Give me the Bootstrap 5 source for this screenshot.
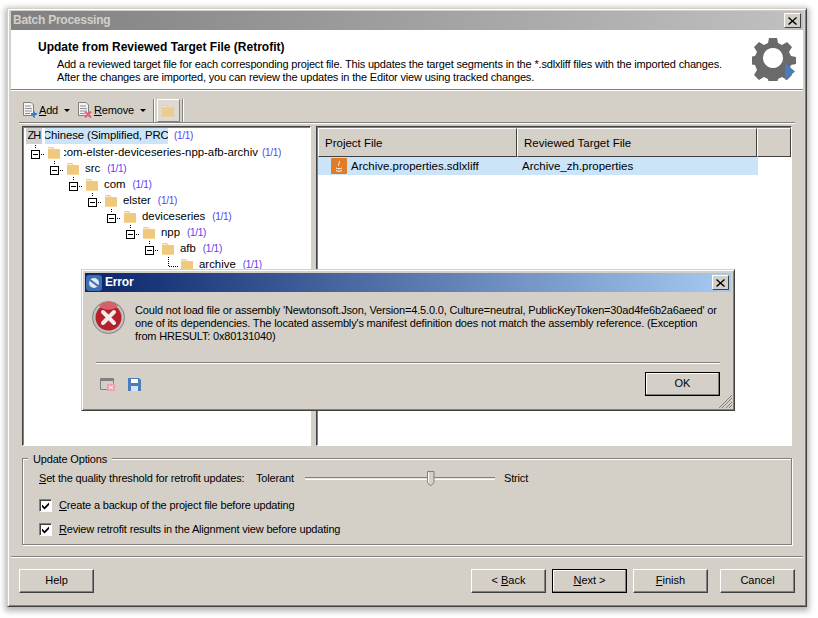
<!DOCTYPE html>
<html lang="en"><head><meta charset="utf-8"><title>Batch Processing</title>
<link href="https://cdn.jsdelivr.net/npm/bootstrap@5.3.0/dist/css/bootstrap.min.css" rel="stylesheet">
<style>
html,body{background:#fff;margin:0;height:618px;overflow:hidden}
body{font-family:"Liberation Sans",Arial,sans-serif;font-size:11px;letter-spacing:-.17px;line-height:13px;color:#000}
u{text-decoration:underline;text-underline-offset:1px}
.wz{position:relative;margin:8px 0 0 7px;width:800px;height:599px;background:#d4d0c8;border:1px solid;border-color:#d4d0c8 #404040 #404040 #d4d0c8;padding:2px 3px 3px 3px;box-shadow:inset 1px 1px 0 #fff,inset -1px -1px 0 #808080,0 2px 6px 2px rgba(0,0,0,.3)}
.tbar{height:19px;padding:0 2px;background:linear-gradient(90deg,#808080,#c0c0c0);color:#d4d0c8;font-weight:700;font-size:12px;letter-spacing:-.25px}
.xbtn{width:17px;height:15px;padding:0;background:#d4d0c8;border:1px solid;border-color:#fff #404040 #404040 #fff;color:#000;display:flex;align-items:center;justify-content:center}
.hdr{height:60px;background:#fff;border-bottom:1px solid #808080;box-shadow:0 1px 0 #fff;position:relative}
.hdr h1{font-size:12px;line-height:13px;font-weight:700;margin:0;padding:11px 0 0 27px;letter-spacing:0}
.hdr p{margin:4px 0 0 46px;white-space:nowrap}
.hgear{position:absolute;left:741px;top:7px}
.tools{height:33px;margin:0 8px;border-bottom:1px solid #808080;padding-top:9px;box-shadow:0 1px 0 #fff}
.tools svg{display:block}
.tbtn{margin-left:3px;gap:2px;height:22px}
.caret{width:0;height:0;border:3px solid transparent;border-top:3px solid #000;border-bottom:0;margin-left:4px}
.addb{width:52px}.remb{width:76px}
.tsep{width:2px;height:23px;border-left:1px solid #808080;border-right:1px solid #fff}
.tfold{width:23px;height:23px;border:1px solid;border-color:#fff #808080 #808080 #fff;margin:0 2px;background:#dedad2}
.panes{height:320px;margin:3px 0 0 11px;gap:5px}
.sunk{background:#fff;border:1px solid;border-color:#404040 #fff #fff #404040;box-shadow:inset 1px 1px 0 #808080;overflow:hidden}
.ltree{width:289px;padding:1px 0 0 3px;font-size:11.4px;letter-spacing:0}
.rlist{width:476px;padding:1px 0 0 1px;font-size:11.5px;letter-spacing:0}
.trow{height:16px;white-space:nowrap;line-height:14px}
.d1{padding-left:5px}.d2{padding-left:24px}.d3{padding-left:43px}.d4{padding-left:62px}.d5{padding-left:81px}.d6{padding-left:100px}.d7{padding-left:119px}.d8{padding-left:138px}
.xpnd{width:16px;flex:none}
.fold{margin-right:5px;flex:none}
.cnt{color:#5c3cf0;font-size:10px;letter-spacing:-.3px;margin:1px 0 0 7px}
.cnt.near{margin-left:4px}
.cnt.far{margin-left:6px}
.zh{width:16px;height:16px;background:#d0d0d0;text-align:center;font-size:11px;letter-spacing:-.8px;margin-right:3px;flex:none}
.sel{width:123px;height:16px;background:#cce4f7;overflow:hidden}
.sel span{margin-left:-2px;letter-spacing:-.12px}
.clip{width:194px;overflow:hidden;margin-left:-2px}
.clip span{margin-left:-3px}
.th{height:29px;background:#d4d0c8;border:1px solid;border-color:#fff #404040 #404040 #fff;line-height:28px;padding-left:6px}
.c1{width:199px}.c2{width:240px}.c3{width:34px}
.drow{width:440px;height:18px;background:#cce4f7;line-height:18px}
.ficon{margin:0 4px 0 13px}
.dn1{width:171px}
.opts{height:87px;margin:12px 0 0 11px;width:770px;border:1px solid #808080;box-shadow:inset 1px 1px 0 #fff,1px 1px 0 #fff;padding:0 0 0 16px}
.olg{width:max-content;background:#d4d0c8;margin:-6px 0 0 -11px;padding:0 5px 0 5px;height:13px}
.orow{height:13px;margin-top:6px}
.olbl{width:217px;flex:none}.otol{width:49px;flex:none}
.trk{width:190px;height:3px;margin:0 9px 0 0;border-top:1px solid #808080;border-bottom:1px solid #fff;background:#e8e6e0;position:relative}
.thumb{position:absolute;left:122px;top:-7px}
.ochk{margin-top:14px;height:13px}
.ochk.nx{margin-top:11px}
.bx{width:13px;height:13px;background:#fff;border:1px solid;border-color:#808080 #fff #fff #808080;box-shadow:inset 1px 1px 0 #404040;margin-right:7px;flex:none}
.bx svg{display:block;margin:1px}
.sep{height:2px;margin-top:11px;border-top:1px solid #808080;border-bottom:1px solid #fff}
.btns{padding:11px 8px 0 8px}
.wb{width:75px;height:24px;padding:0 0 2px;background:#d4d0c8;color:#000;font:inherit;border:1px solid;border-color:#fff #404040 #404040 #fff;box-shadow:inset -1px -1px 0 #808080;border-radius:0}
.wb.def{outline:1px solid #000;outline-offset:-1px;border-color:#fff #404040 #404040 #fff;box-shadow:inset -1px -1px 0 #808080,inset 1px 1px 0 #fff}
.ms6{margin-left:6px}.ms12{margin-left:12px}
.dlg{position:absolute;left:73px;top:260px;width:654px;height:142px;background:#d4d0c8;border:1px solid;border-color:#d4d0c8 #404040 #404040 #d4d0c8;box-shadow:inset 1px 1px 0 #fff,inset -1px -1px 0 #808080;padding:3px}
.dtb{height:19px;background:linear-gradient(90deg,#0a246a,#a6caf0);color:#fff;font-weight:700;font-size:12px;padding:0 2px 0 1px;gap:3px}
.dbody{padding:9px 0 0 7px}
.dmsg{margin:3px 0 0 10px;white-space:nowrap}
.dsep{height:2px;margin:19px 11px 0 11px;border-top:1px solid #808080;border-bottom:1px solid #fff}
.dft{padding:8px 11px 0 15px}
.grip{position:absolute;right:2px;bottom:2px}
</style></head><body>
<svg width="0" height="0" class="d-none"><defs>
<g id="fo"><path d="M1 3.500 1.500 2H6L7.500 4H13V13.500H1Z" fill="#f0cd85"/><path d="M1 5H13V13.500H1Z" fill="#efc97d"/><path d="M1.500 3H6V4H1.500Z" fill="#fff" opacity=".6"/></g>
<g id="ex"><rect x=".5" y=".5" width="8" height="8" fill="#fff" stroke="#000"/><path d="M2 4.500H7" stroke="#000"/><path d="M4.500-5V-1M10 4.500H14" stroke="#000" stroke-dasharray="1 1"/></g>
<g id="doc"><path d="M1.500.5H9L11.500 3V13.500H1.500Z" fill="#f4f4f4" stroke="#808080"/><path d="M3 4H9M3 6.500H10M3 9H10M3 11.500H8" stroke="#909090"/></g>
</defs></svg>
<div class="wz d-flex flex-column">
 <div class="tbar d-flex justify-content-between align-items-center"><span>Batch Processing</span><button class="xbtn" aria-label="Close"><svg width="9" height="8"><path d="M1 0 4.500 3.200 8 0 9 1 5.500 4 9 7 8 8 4.500 5 1 8 0 7 3.500 4 0 1Z"/></svg></button></div>
 <div class="hdr">
  <h1>Update from Reviewed Target File (Retrofit)</h1>
  <p>Add a reviewed target file for each corresponding project file. This updates the target segments in the *.sdlxliff files with the imported changes.<br>After the changes are imported, you can review the updates in the Editor view using tracked changes.</p>
  <svg class="hgear" width="44" height="44" viewBox="0 0 44 44"><path fill="#6a6a6a" fill-rule="evenodd" d="M17 1h8l1 5 4 2 5-3 5 5-3 5 2 4 5 1v7l-5 1-2 5 3 5-5 5-5-3-4 2-1 5h-8l-1-5-4-2-5 3-5-5 3-5-2-5-5-1v-7l5-1 2-4-3-5 5-5 5 3 4-2zM21 11a10 10 0 1 0 .01 0Z"/><path d="M33 26v17l10-8.500Z" fill="#4a7ebb"/></svg>
 </div>
 <div class="tools d-flex">
  <div class="tbtn addb d-flex align-items-center"><svg width="15" height="16"><use href="#doc"/><path d="M9 12h6M12 9.500v6" stroke="#3b7ec4" stroke-width="2"/></svg><span><u>A</u>dd</span><i class="caret"></i></div>
  <div class="tbtn remb d-flex align-items-center"><svg width="15" height="16"><use href="#doc"/><path d="M8 9.500l6 6M14 9.500l-6 6" stroke="#e0607a" stroke-width="2"/></svg><span><u>R</u>emove</span><i class="caret"></i></div>
  <div class="tsep"></div>
  <div class="tfold d-flex align-items-center justify-content-center"><svg width="15" height="15" class="opacity-75"><use href="#fo"/></svg></div>
  <div class="tsep"></div>
 </div>
 <div class="panes d-flex">
  <div class="sunk ltree">
   <div class="trow d-flex"><span class="zh">ZH</span><div class="sel"><span>Chinese (Simplified, PRC)</span></div><span class="cnt far">(1/1)</span></div>
   <div class="trow d-flex align-items-center d1"><svg class="xpnd" width="16" height="14" viewBox="0 -5 16 14"><use href="#ex"/></svg><svg class="fold" width="14" height="15"><use href="#fo"/></svg><div class="clip"><span>com-elster-deviceseries-npp-afb-archive</span></div><span class="cnt near">(1/1)</span></div>
   <div class="trow d-flex align-items-center d2"><svg class="xpnd" width="16" height="14" viewBox="0 -5 16 14"><use href="#ex"/></svg><svg class="fold" width="14" height="15"><use href="#fo"/></svg><span>src</span><span class="cnt">(1/1)</span></div>
   <div class="trow d-flex align-items-center d3"><svg class="xpnd" width="16" height="14" viewBox="0 -5 16 14"><use href="#ex"/></svg><svg class="fold" width="14" height="15"><use href="#fo"/></svg><span>com</span><span class="cnt">(1/1)</span></div>
   <div class="trow d-flex align-items-center d4"><svg class="xpnd" width="16" height="14" viewBox="0 -5 16 14"><use href="#ex"/></svg><svg class="fold" width="14" height="15"><use href="#fo"/></svg><span>elster</span><span class="cnt">(1/1)</span></div>
   <div class="trow d-flex align-items-center d5"><svg class="xpnd" width="16" height="14" viewBox="0 -5 16 14"><use href="#ex"/></svg><svg class="fold" width="14" height="15"><use href="#fo"/></svg><span>deviceseries</span><span class="cnt">(1/1)</span></div>
   <div class="trow d-flex align-items-center d6"><svg class="xpnd" width="16" height="14" viewBox="0 -5 16 14"><use href="#ex"/></svg><svg class="fold" width="14" height="15"><use href="#fo"/></svg><span>npp</span><span class="cnt">(1/1)</span></div>
   <div class="trow d-flex align-items-center d7"><svg class="xpnd" width="16" height="14" viewBox="0 -5 16 14"><use href="#ex"/></svg><svg class="fold" width="14" height="15"><use href="#fo"/></svg><span>afb</span><span class="cnt">(1/1)</span></div>
   <div class="trow d-flex align-items-center d8"><svg class="xpnd" width="16" height="14" viewBox="0 -5 16 14"><path d="M4.500-5V4.500H14" stroke="#000" stroke-dasharray="1 1" fill="none"/></svg><svg class="fold" width="14" height="15"><use href="#fo"/></svg><span>archive</span><span class="cnt">(1/1)</span></div>
  </div>
  <div class="sunk rlist">
   <div class="d-flex"><div class="th c1">Project File</div><div class="th c2">Reviewed Target File</div><div class="th c3"></div></div>
   <div class="drow d-flex align-items-center"><svg class="ficon" width="16" height="16"><rect width="16" height="16" rx="1" fill="#e07b28"/><path d="M8 3c2 2-2 3 0 5M5 10c2 1 4 1 6 0M5 12.500c2 1 4 1 6 0" stroke="#fff" fill="none"/></svg><span class="dn1">Archive.properties.sdlxliff</span><span>Archive_zh.properties</span></div>
  </div>
 </div>
 <div class="opts">
  <div class="olg">Update Options</div>
  <div class="orow d-flex align-items-center"><span class="olbl"><u>S</u>et the quality threshold for retrofit updates:</span><span class="otol">Tolerant</span><div class="trk"><svg class="thumb" width="8" height="16"><path d="M.5.500h6.500v11l-3.500 3.500-3-3.500Z" fill="#d4d0c8" stroke="#808080"/><path d="M1.500 1.500v10" stroke="#fff"/></svg></div><span>Strict</span></div>
  <div class="ochk d-flex align-items-center"><span class="bx"><svg width="9" height="9"><path d="M1 3.500 3.500 6 8 1.500V4L3.500 8.500 1 6Z"/></svg></span><span><u>C</u>reate a backup of the project file before updating</span></div>
  <div class="ochk nx d-flex align-items-center"><span class="bx"><svg width="9" height="9"><path d="M1 3.500 3.500 6 8 1.500V4L3.500 8.500 1 6Z"/></svg></span><span><u>R</u>eview retrofit results in the Alignment view before updating</span></div>
 </div>
 <div class="sep"></div>
 <div class="btns d-flex">
  <button class="wb">Help</button>
  <button class="wb ms-auto">&lt; <u>B</u>ack</button>
  <button class="wb def ms6"><u>N</u>ext &gt;</button>
  <button class="wb ms6"><u>F</u>inish</button>
  <button class="wb ms12">Cancel</button>
 </div>
 <div class="dlg d-flex flex-column">
  <div class="dtb d-flex align-items-center"><svg width="16" height="16"><rect width="16" height="16" rx="3" fill="#3d6db3"/><circle cx="8" cy="8" r="5" fill="#dfe8f4"/><path d="M4 5l8 6" stroke="#3d6db3" stroke-width="2"/></svg><span>Error</span><button class="xbtn ms-auto" aria-label="Close"><svg width="9" height="8"><path d="M1 0 4.500 3.200 8 0 9 1 5.500 4 9 7 8 8 4.500 5 1 8 0 7 3.500 4 0 1Z"/></svg></button></div>
  <div class="dbody d-flex">
   <svg width="33" height="33" class="flex-shrink-0"><circle cx="16.500" cy="16.500" r="16" fill="#c0c0c0" stroke="#808080"/><circle cx="16.500" cy="16.500" r="13" fill="#b5202a"/><path d="M7 5a13 13 0 0 1 19 0c-5 5-14 5-19 0Z" fill="#d7606a"/><path d="M11 11 22 22M22 11 11 22" stroke="#eee" stroke-width="4" stroke-linecap="round"/></svg>
   <div class="dmsg">Could not load file or assembly 'Newtonsoft.Json, Version=4.5.0.0, Culture=neutral, PublicKeyToken=30ad4fe6b2a6aeed' or<br>one of its dependencies. The located assembly's manifest definition does not match the assembly reference. (Exception<br>from HRESULT: 0x80131040)</div>
  </div>
  <div class="dsep"></div>
  <div class="dft d-flex align-items-center">
   <svg width="16" height="16" class="me-2"><path d="M.5 2.500h13v5M.5 2.500v11h7" fill="none" stroke="#808080"/><path d="M1 3h13v2H1Z" fill="#808080"/><rect x="7" y="8" width="8" height="7" fill="#f0a0b0"/><path d="M9 10l4 3M13 10l-4 3" stroke="#fff"/></svg>
   <svg width="13" height="13" class="ms-1"><path d="M0 0h11l2 2v11H0Z" fill="#4a7ebb"/><path d="M3 1h7v4H3Z" fill="#fff"/><path d="M3 8h7v5H3Z" fill="#d4e2f2"/></svg>
   <button class="wb def ms-auto">OK</button>
  </div>
  <svg class="grip" width="13" height="13"><path d="M13 0 0 13M13 3 3 13M13 7 7 13M13 10 10 13" stroke="#808080"/></svg>
 </div>
</div>
</body></html>
